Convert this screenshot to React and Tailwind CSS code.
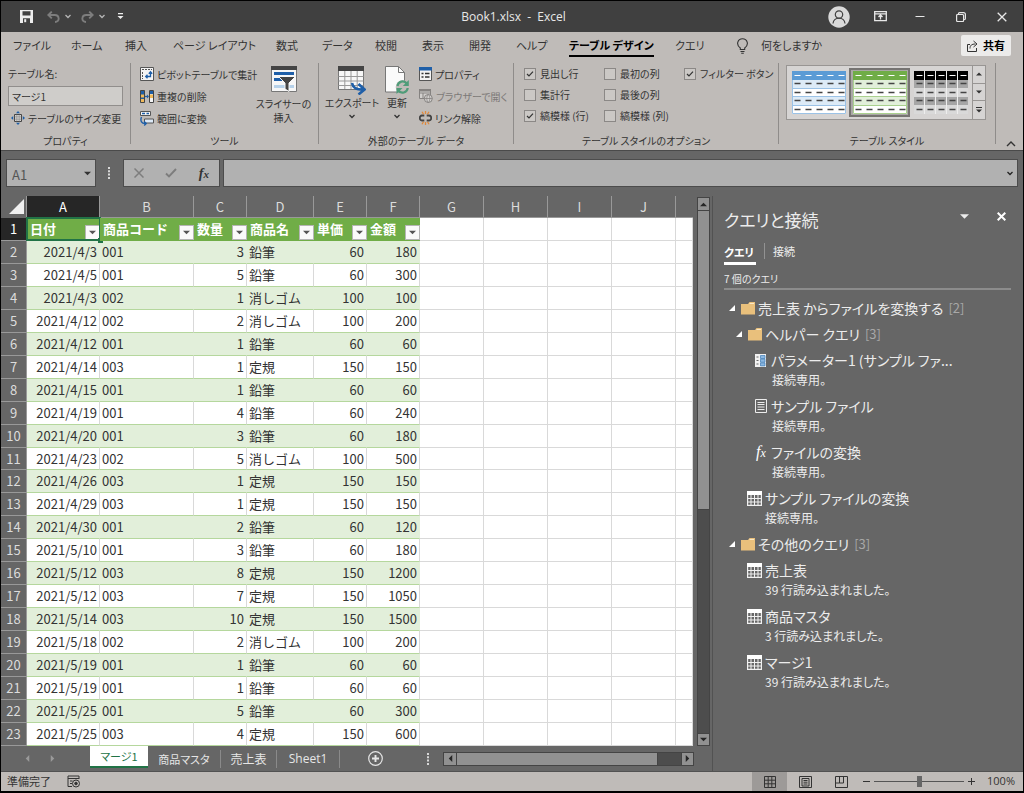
import { useState } from 'react';

const TABS = [
  { name: 'ファイル', width: 'w-[58px]' },
  { name: 'ホーム', width: 'w-[54px]' },
  { name: '挿入', width: 'w-[48px]' },
  { name: 'ページ レイアウト', width: 'w-[103px]' },
  { name: '数式', width: 'w-[46px]' },
  { name: 'データ', width: 'w-[53px]' },
  { name: '校閲', width: 'w-[47px]' },
  { name: '表示', width: 'w-[47px]' },
  { name: '開発', width: 'w-[47px]' },
  { name: 'ヘルプ', width: 'w-[53px]' },
  { name: 'テーブル デザイン', width: 'w-[106px]' },
  { name: 'クエリ', width: 'w-[60px]' }
];

const HEADERS = ['日付', '商品コード', '数量', '商品名', '単価', '金額'];

const PRODUCTS = {
  '001': { name: '鉛筆', price: 60 },
  '002': { name: '消しゴム', price: 100 },
  '003': { name: '定規', price: 150 }
};

const SALES = [
  ['2021/4/3', '001', 3],
  ['2021/4/5', '001', 5],
  ['2021/4/3', '002', 1],
  ['2021/4/12', '002', 2],
  ['2021/4/12', '001', 1],
  ['2021/4/14', '003', 1],
  ['2021/4/15', '001', 1],
  ['2021/4/19', '001', 4],
  ['2021/4/20', '001', 3],
  ['2021/4/23', '002', 5],
  ['2021/4/26', '003', 1],
  ['2021/4/29', '003', 1],
  ['2021/4/30', '001', 2],
  ['2021/5/10', '001', 3],
  ['2021/5/12', '003', 8],
  ['2021/5/12', '003', 7],
  ['2021/5/14', '003', 10],
  ['2021/5/18', '002', 2],
  ['2021/5/19', '001', 1],
  ['2021/5/19', '001', 1],
  ['2021/5/25', '001', 5],
  ['2021/5/25', '003', 4]
];

const QUERIES = [
  { type: 'folder', indent: 'pl-[5px]', name: '売上表 からファイルを変換する', count: 2 },
  { type: 'folder', indent: 'pl-[12px]', name: 'ヘルパー クエリ', count: 3 },
  { type: 'param', indent: 'pl-[30px]', name: 'パラメーター1 (サンプル ファ...', note: '接続専用。' },
  { type: 'text', indent: 'pl-[30px]', name: 'サンプル ファイル', note: '接続専用。' },
  { type: 'fx', indent: 'pl-[30px]', name: 'ファイルの変換', note: '接続専用。' },
  { type: 'table', indent: 'pl-[23px]', name: 'サンプル ファイルの変換', note: '接続専用。' },
  { type: 'folder', indent: 'pl-[5px]', name: 'その他のクエリ', count: 3 },
  { type: 'table', indent: 'pl-[23px]', name: '売上表', note: '39 行読み込まれました。' },
  { type: 'table', indent: 'pl-[23px]', name: '商品マスタ', note: '3 行読み込まれました。' },
  { type: 'table', indent: 'pl-[23px]', name: 'マージ1', note: '39 行読み込まれました。' }
];

const Chevron = ({ className }) => (
  <svg className={className} width="8" height="5" viewBox="0 0 8 5" fill="none" stroke="currentColor" strokeWidth="1.3">
    <path d="M1.5 1 4 3.5 6.5 1" />
  </svg>
);

const Triangle = ({ dir = 'down', size = 7 }) => {
  const paths = {
    down: 'M0 2h8L4 6z',
    up: 'M0 6h8L4 2z',
    left: 'M6 0v8L2 4z',
    right: 'M2 0v8l4-4z'
  };
  return (
    <svg width={size} height={size} viewBox="0 0 8 8" fill="currentColor">
      <path d={paths[dir]} />
    </svg>
  );
};

const Dots = () => (
  <svg width="3" height="12" viewBox="0 0 3 12" fill="#d8d8d8">
    <path d="M0 0h2v2H0zM0 3.3h2v2H0zM0 6.6h2v2H0zM0 10h2v2H0z" />
  </svg>
);

/* Title bar */
const TitleBar = () => (
  <header className="flex h-[31px] shrink-0 items-center bg-[#404040] text-[#e8e8e8]">
    <div className="flex flex-1 items-center pl-[19px]">
      <button aria-label="上書き保存">
        <svg width="13" height="13" viewBox="0 0 13 13">
          <path d="M0 0h13v13H0z" fill="#ececec" />
          <path d="M2.5 1.2h8v4.3h-8zM3 8.3h7V13H3z" fill="#404040" />
          <path d="M4.2 9.2h2v3h-2z" fill="#ececec" />
        </svg>
      </button>
      <button aria-label="元に戻す" className="ml-[14px] flex items-center text-[#7d7d7d]">
        <svg width="13" height="12" viewBox="0 0 13 12" fill="none" stroke="currentColor" strokeWidth="1.9">
          <path d="M4.8.6 1.3 4l3.5 3.4M1.5 4h6.2c5 0 5.4 7 .3 7" />
        </svg>
        <Chevron className="ml-1 text-[#b5b5b5]" />
      </button>
      <button aria-label="やり直し" className="ml-[9px] flex items-center text-[#7d7d7d]">
        <svg width="13" height="12" viewBox="0 0 13 12" fill="none" stroke="currentColor" strokeWidth="1.9">
          <path d="M8.2.6 11.7 4 8.2 7.4M11.5 4H5.3c-5 0-5.4 7-.3 7" />
        </svg>
        <Chevron className="ml-1 text-[#b5b5b5]" />
      </button>
      <button aria-label="クイック アクセス ツール バーのユーザー設定" className="ml-[11px]">
        <svg width="7" height="7" viewBox="0 0 7 7" fill="#ececec">
          <path d="M1 0h5v1.3H1zM.5 3h6l-3 3z" />
        </svg>
      </button>
    </div>
    <h1 className="font-['Open_Sans','Noto_Sans_CJK_JP',sans-serif] text-[12px] whitespace-pre">Book1.xlsx  -  Excel</h1>
    <div className="flex flex-1 items-center justify-end pr-4">
      <button aria-label="アカウント">
        <svg width="22" height="22" viewBox="0 0 22 22">
          <circle cx="11" cy="11" r="10.7" fill="#d9d9d9" />
          <g fill="none" stroke="#404040" strokeWidth="1.2">
            <circle cx="11" cy="8.5" r="3.7" />
            <path d="M5 17.5c.5-7 11.5-7 12 0" />
          </g>
        </svg>
      </button>
      <button aria-label="リボンの表示オプション" className="ml-6">
        <svg width="13" height="11" viewBox="0 0 13 11" fill="none" stroke="currentColor" strokeWidth="1.3">
          <path d="M.7.7h11.6v9H.7zM.7 2.8h11.6M6.5 8.5V4.5M4.5 6l2-2 2 2" />
        </svg>
      </button>
      <button aria-label="最小化" className="ml-[28px]">
        <svg width="10" height="10" viewBox="0 0 10 10" stroke="currentColor"><path d="M.5 4.5h9" /></svg>
      </button>
      <button aria-label="元に戻す (縮小)" className="ml-[31px]">
        <svg width="10" height="10" viewBox="0 0 10 10" fill="none" stroke="currentColor" strokeWidth="1.2">
          <rect x=".6" y="2.5" width="7" height="7" rx="1" />
          <path d="M2.5 2.5V1.5Q2.5.6 3.5.6h4Q9.4.6 9.4 2.500v4Q9.400 7.500 8.500 7.500H7.500" />
        </svg>
      </button>
      <button aria-label="閉じる" className="ml-[31px]">
        <svg width="10" height="10" viewBox="0 0 10 10" stroke="currentColor" strokeWidth="1.3"><path d="m.7.7 8.6 8.6M9.3.7.7 9.3" /></svg>
      </button>
    </div>
  </header>
);

/* Ribbon pieces */
const RibbonGroup = ({ label, className, children }) => (
  <section className={`flex shrink-0 ${className}`}>
    <div className="flex min-w-0 flex-1 flex-col">
      <div className="flex h-[66px]">{children}</div>
      <h2 className="mt-1 h-4 text-center leading-4">{label}</h2>
    </div>
    <div className="h-[81px] w-px bg-[#8f8c8a]" />
  </section>
);

const SmallButton = ({ icon, label, disabled }) => (
  <button disabled={disabled} className="flex h-[22px] items-center gap-[3px] whitespace-nowrap disabled:text-[#7c7977]">
    <span className="shrink-0">{icon}</span>
    <span>{label}</span>
  </button>
);

const CheckOption = ({ label, defaultChecked = false }) => (
  <label className="flex h-[21px] items-center gap-1">
    <span className="relative block size-[12px]">
      <input
        type="checkbox"
        defaultChecked={defaultChecked}
        className="peer block size-[12px] appearance-none border border-[#8b8886] bg-[#cbc8c5]"
      />
      <svg className="pointer-events-none absolute inset-0 hidden peer-checked:block" width="12" height="12" viewBox="0 0 12 12" fill="none" stroke="#333" strokeWidth="1.2">
        <path d="m3 6 2 2 4-4.3" />
      </svg>
    </span>
    <span>{label}</span>
  </label>
);

const PivotIcon = () => (
  <svg width="14" height="14" viewBox="0 0 14 14">
    <path d="M.5.5h13v13H.5z" fill="#f4f4f4" stroke="#555" />
    <path d="M2 2.5h2M5 2.5h7M2.5 5v7" stroke="#555" strokeDasharray="2 1" />
    <path d="M10.5 5v4.5H6M8.8 6.7l1.7-1.9 1.7 1.9M7.5 7.8 5.7 9.5l1.8 1.8" fill="none" stroke="#1f5fa8" strokeWidth="1.3" />
  </svg>
);

const DuplicateIcon = () => (
  <svg width="14" height="13" viewBox="0 0 14 13">
    <path d="M.5.5h4v12h-4z" fill="#1f5fa8" stroke="#444" />
    <path d="M1 4.5h3v3H1zM1 9h3v3H1z" fill="#f0b95a" />
    <path d="M9.5.5h4v12h-4z" fill="#f4f4f4" stroke="#444" />
    <path d="M10 1h3v3h-3z" fill="#1f5fa8" />
    <path d="M10 4.5h3V8h-3z" fill="#f0b95a" />
    <path d="M5 6.500h3" stroke="#1f5fa8" strokeWidth="1.3" />
    <path d="M7 4.500v4l2-2z" fill="#1f5fa8" />
  </svg>
);

const RangeIcon = () => (
  <svg width="14" height="15" viewBox="0 0 14 15">
    <path d="M.5.5h10v4H.5z" fill="#f4f4f4" stroke="#555" />
    <path d="M2 2.5h3M6.5 2.5H9" stroke="#1f5fa8" strokeWidth="1.5" />
    <path d="M4.5 8h9v4h-9z" fill="#dce9f7" stroke="#555" />
    <path d="M1.5 6c-1.5 4 0 7 4.5 6.5M4.2 10.4l2 2-2 2" fill="none" stroke="#1f5fa8" strokeWidth="1.4" />
  </svg>
);

const ResizeIcon = () => (
  <svg width="14" height="14" viewBox="0 0 14 14">
    <path d="M3.5 3.5h7v7h-7z" fill="#d4d2d0" stroke="#444" />
    <path d="M5.8 3.5v7M8.2 3.5v7M3.5 5.8h7M3.5 8.2h7" stroke="#888" strokeWidth=".6" />
    <path d="M7 0 5 2.2h4zM7 14l-2-2.2h4zM0 7l2.2-2v4zM14 7l-2.2-2v4z" fill="#1f5fa8" />
  </svg>
);

const SlicerIcon = () => (
  <svg width="26" height="27" viewBox="0 0 26 27">
    <path d="M.5.5h25v25H.5z" fill="#f7f7f7" stroke="#777" />
    <path d="M0 0h26v4H0z" fill="#444" />
    <path d="M3 6h20v3H3zM3 12h8v3H3z" fill="#1f5fa8" />
    <path d="M3 19h20v3H3z" fill="#b7d2ea" />
    <path d="M7.5 10.500h17L18 17v8.500l-4-2.500v-6z" fill="#444" stroke="#f7f7f7" />
  </svg>
);

const ExportIcon = () => (
  <svg width="28" height="29" viewBox="0 0 28 29">
    <path d="M.5 1h25v22.5H.5z" fill="#f7f7f7" stroke="#777" />
    <path d="M0 0h26v5H0z" fill="#444" />
    <path d="M.5 10.5h25M.5 15h25M.5 19.5h25M6.8 5v18M13 5v18M19.2 5v18" stroke="#999" />
    <path d="M14 17c1 5 4 6.500 11 6.500M20.500 18l6 5.500-6 5" fill="none" stroke="#1f5fa8" strokeWidth="2.600" />
  </svg>
);

const RefreshIcon = () => (
  <svg width="25" height="28" viewBox="0 0 25 28">
    <path d="M.5.5h13l6 6V26H.5z" fill="#fafafa" stroke="#777" />
    <path d="M13.5.5v6h6" fill="none" stroke="#777" />
    <circle cx="17.5" cy="21" r="6.8" fill="#bfbbb8" />
    <path d="M12.500 20a5.200 5.200 0 0 1 9.300-2.500M22.700 22a5.200 5.200 0 0 1-9.400 2.500" fill="none" stroke="#4f9c79" strokeWidth="2.200" />
    <path d="M23.800 14v6h-6zM11.500 28v-6h6z" fill="#4f9c79" />
  </svg>
);

const PropertyIcon = () => (
  <svg width="13" height="14" viewBox="0 0 13 14">
    <path d="M.5.5h12v13H.5z" fill="#f4f4f4" stroke="#555" />
    <path d="M0 0h13v3.5H0z" fill="#1f5fa8" />
    <path d="M2.5 6.5h2M6 6.5h4.500M2.500 10h2M6 10h4.500" stroke="#333" strokeWidth="1.5" />
  </svg>
);

const BrowserIcon = () => (
  <svg width="14" height="14" viewBox="0 0 14 14" fill="none" stroke="#858280">
    <path d="M.5.5h11v9H.5zM.5 4h11M4 4v5.5" fill="#d2d0ce" />
    <path d="M0 0h12v2.5H0z" fill="#858280" stroke="none" />
    <circle cx="9.3" cy="9.5" r="4" fill="#d2d0ce" />
    <path d="M5.3 9.5h8M9.3 5.5c-2 2-2 6 0 8M9.3 5.500c2 2 2 6 0 8" strokeWidth=".8" />
  </svg>
);

const UnlinkIcon = () => (
  <svg width="13" height="14" viewBox="0 0 13 14" fill="none">
    <path d="M5.3 4.500H3C0 4.500 0 9.500 3 9.500h2.300M7.700 4.500H10c3 0 3 5 0 5H7.700" stroke="#444" strokeWidth="1.8" />
    <path d="M4.500 3.300 3 .7M6.500 3V0M8.500 3.300 10 .7M4.500 10.700 3 13.300M6.500 11v3M8.500 10.700l1.500 2.600" stroke="#e08a3c" strokeWidth="1.3" />
  </svg>
);

const StylePreview = ({ head, band, plain, line, dash, grid }) => (
  <svg width="54" height="43" viewBox="0 0 54 43">
    <rect width="54" height="43" fill={plain} />
    <rect width="54" height="9" fill={head} />
    <rect y="9" width="54" height="8" fill={band} />
    <rect y="26" width="54" height="8" fill={band} />
    {line && <path d="M.5 9v33.5h53V9M0 17.5h54M0 25.5h54M0 34.5h54" fill="none" stroke={line} />}
    {grid && <path d="M10.5 0v43M21.5 0v43M32.5 0v43M43.5 0v43" stroke={grid} />}
    <path d="M2.500 4.500h50" stroke="#fff" strokeDasharray="6 5" />
    <path d="M2.500 12.500h50M2.500 21.500h50M2.500 29.500h50M2.500 38.500h50" stroke={dash} strokeWidth="1.3" strokeDasharray="6 5" />
  </svg>
);

const Ribbon = () => {
  const [active, setActive] = useState('テーブル デザイン');

  return (
    <div className="h-[118px] shrink-0 overflow-hidden bg-[#bfbbb8] text-[10px] text-[#333] [font-feature-settings:'palt']">
      {/* Tabs */}
      <nav className="mb-1 flex h-[27px] items-center pl-3 text-[11px]">
        {TABS.map((tab) => (
          <div key={tab.name} className={`shrink-0 ${tab.width}`}>
            <button
              onClick={() => setActive(tab.name)}
              className={
                active === tab.name
                  ? 'h-[23px] border-b-2 border-black pt-[2px] font-bold text-black'
                  : 'h-[23px] border-b-2 border-transparent pt-[2px]'
              }
            >
              {tab.name}
            </button>
          </div>
        ))}
        <button className="ml-[2px] flex items-center gap-[13px]">
          <svg width="11" height="16" viewBox="0 0 11 16" fill="none" stroke="#333" strokeWidth="1.1">
            <path d="M3.300 11.500V10C-1.500 6.500.8.700 5.500.700S12.500 6.500 7.700 10v1.500zM3.500 13.500h4M4.200 15.300h2.600" />
          </svg>
          何をしますか
        </button>
        <button className="mr-3 ml-auto flex h-[21px] items-center gap-[5px] rounded-xs bg-[#ecebea] px-[6px] font-bold text-black">
          <svg width="11" height="12" viewBox="0 0 11 12" fill="none" stroke="#333">
            <path d="M3 4.500H.5v7h9V8M3 8.500c0-3 1.500-4.500 5.500-4.500M6.500 1 10 4 6.500 7" />
          </svg>
          共有
        </button>
      </nav>

      {/* Groups */}
      <div className="flex">
        <RibbonGroup label="プロパティ" className="w-[130px]">
          <div className="flex flex-1 flex-col pr-[7px] pl-[7px]">
            <label htmlFor="table-name" className="h-[22px] leading-[22px]">テーブル名:</label>
            <input id="table-name" defaultValue="マージ1" className="my-px h-[20px] w-full border border-[#918e8c] bg-[#cfcdca] px-[3px]" />
            <div className="pl-[3px]">
              <SmallButton icon={<ResizeIcon />} label="テーブルのサイズ変更" />
            </div>
          </div>
        </RibbonGroup>

        <RibbonGroup label="ツール" className="w-[188px]">
          <div className="flex w-[118px] shrink-0 flex-col pl-[9px]">
            <SmallButton icon={<PivotIcon />} label="ピボットテーブルで集計" />
            <SmallButton icon={<DuplicateIcon />} label="重複の削除" />
            <SmallButton icon={<RangeIcon />} label="範囲に変換" />
          </div>
          <button className="flex flex-1 flex-col items-center gap-1 pt-[3px] leading-[14px] whitespace-nowrap">
            <SlicerIcon />
            <span>スライサーの<br />挿入</span>
          </button>
        </RibbonGroup>

        <RibbonGroup label="外部のテーブル データ" className="w-[195px]">
          <button className="flex w-[66px] shrink-0 flex-col items-center pt-[3px] leading-[14px] whitespace-nowrap">
            <ExportIcon />
            <span className="mt-px">エクスポート</span>
            <Chevron className="mt-1" />
          </button>
          <button className="flex w-6 shrink-0 flex-col items-center pt-[3px] leading-[14px] whitespace-nowrap">
            <RefreshIcon />
            <span className="mt-[2px]">更新</span>
            <Chevron className="mt-1" />
          </button>
          <div className="flex flex-col pl-[10px]">
            <SmallButton icon={<PropertyIcon />} label="プロパティ" />
            <SmallButton icon={<BrowserIcon />} label="ブラウザーで開く" disabled />
            <SmallButton icon={<UnlinkIcon />} label="リンク解除" />
          </div>
        </RibbonGroup>

        <RibbonGroup label="テーブル スタイルのオプション" className="w-[265px]">
          <div className="grid grid-cols-[80px_80px_1fr] content-start pl-[10px] whitespace-nowrap">
            <CheckOption label="見出し行" defaultChecked />
            <CheckOption label="最初の列" />
            <CheckOption label="フィルター ボタン" defaultChecked />
            <CheckOption label="集計行" />
            <CheckOption label="最後の列" />
            <span />
            <CheckOption label="縞模様 (行)" defaultChecked />
            <CheckOption label="縞模様 (列)" />
          </div>
        </RibbonGroup>

        <RibbonGroup label="テーブル スタイル" className="w-[217px]">
          <div className="mt-[2px] ml-[7px] flex h-[55px] border border-[#989593] bg-[#d6d4d3]">
            <button aria-label="青, テーブル スタイル" className="flex w-[62px] items-center pl-[5px]">
              <StylePreview head="#5b9bd5" band="#ddebf7" plain="#fff" line="#9bc2e6" dash="#444" />
            </button>
            <button aria-label="緑, テーブル スタイル" className="my-[2px] flex w-[61px] items-center justify-center border-2 border-[#767472] bg-[#aaa8a6]">
              <StylePreview head="#70ad47" band="#e2efda" plain="#fff" line="#a9d08e" dash="#444" />
            </button>
            <button aria-label="黒, テーブル スタイル" className="flex w-[62px] items-center pl-1">
              <StylePreview head="#000" band="#a6a6a6" plain="#d9d9d9" grid="#eee" dash="#444" />
            </button>
            <div className="grid w-[13px] grid-rows-3 divide-y divide-[#989593] border-l border-[#989593]">
              <button aria-label="前の行" className="flex items-center justify-center"><Triangle dir="up" size={6} /></button>
              <button aria-label="次の行" className="flex items-center justify-center"><Triangle size={6} /></button>
              <button aria-label="その他" className="flex flex-col items-center justify-center">
                <span className="h-px w-[6px] bg-[#333]" />
                <Triangle size={6} />
              </button>
            </div>
          </div>
        </RibbonGroup>
        <button aria-label="リボンを折りたたむ" className="ml-[10px] flex items-end pb-[2px]">
          <svg width="10" height="6" viewBox="0 0 10 6" fill="none" stroke="#333" strokeWidth="1.4"><path d="m1 5 4-4 4 4" /></svg>
        </button>
      </div>
    </div>
  );
};

const FormulaBar = () => (
  <div className="flex shrink-0 items-center border-t border-[#4a4a4a] px-[5px] pt-2 pb-[9px] text-[13px] text-[#555]">
    <div className="flex h-7 w-[90px] items-center border border-[#4c4c4c] bg-[#b1b1b1] pr-1">
      <input aria-label="名前ボックス" defaultValue="A1" className="w-full min-w-0 px-[5px] pt-[3px]" />
      <button aria-label="名前の一覧" className="text-[#333]"><Triangle /></button>
    </div>
    <div className="flex w-[27px] justify-center"><Dots /></div>
    <div className="flex h-7 w-[97px] items-center justify-between border border-[#4c4c4c] bg-[#b1b1b1] pr-[10px] pl-[10px]">
      <button aria-label="キャンセル">
        <svg width="10" height="10" viewBox="0 0 10 10" stroke="#7d7d7d" strokeWidth="1.5"><path d="m.5.5 9 9M9.5.5l-9 9" /></svg>
      </button>
      <button aria-label="入力">
        <svg width="12" height="10" viewBox="0 0 12 10" fill="none" stroke="#7d7d7d" strokeWidth="1.9"><path d="m1 5.5 3 3L11 1" /></svg>
      </button>
      <button aria-label="関数の挿入" className="font-['Liberation_Serif',serif] text-[14px] font-bold text-[#333] italic">
        f<span className="text-[11px]">x</span>
      </button>
    </div>
    <div className="ml-[3px] flex h-7 flex-1 items-center border border-[#4c4c4c] bg-[#b1b1b1] pr-[3px]">
      <input aria-label="数式バー" className="w-full min-w-0 px-1" />
      <button aria-label="数式バーの展開"><Chevron className="text-[#222]" /></button>
    </div>
  </div>
);

const FilterButton = ({ label }) => (
  <button aria-label={`${label} フィルター`} className="flex size-[15px] shrink-0 items-center justify-center border border-[#b5b5b5] bg-[#fafafa] text-[#555]">
    <Triangle />
  </button>
);

const GRID_CELL = 'border-r border-b border-[#d9d9d9] p-0';

const Sheet = () => (
  <table className="h-full w-full table-fixed border-separate border-spacing-0 bg-white text-[13px] leading-4 text-[#333]">
    <colgroup>
      <col className="w-[26px]" />
      <col className="w-[73px]" />
      <col className="w-[94px]" />
      <col className="w-[53px]" />
      <col className="w-[67px]" />
      <col className="w-[53px]" />
      <col className="w-[53px]" />
      <col className="w-[64px]" />
      <col className="w-[64px]" />
      <col className="w-[64px]" />
      <col className="w-[64px]" />
      <col />
    </colgroup>
    <thead>
      <tr className="h-[22px] bg-[#666] text-[#dcdcdc]">
        <th className="border-r border-[#999] p-0">
          <svg className="ml-auto" width="17" height="16" viewBox="0 0 17 16" fill="#f0f0f0"><path d="M15 0v15H0z" /></svg>
        </th>
        {['A', 'B', 'C', 'D', 'E', 'F', 'G', 'H', 'I', 'J'].map((col) => (
          <th
            key={col}
            scope="col"
            className={
              col === 'A'
                ? 'border-r border-b border-[#999] bg-[#262626] p-0 font-normal text-white'
                : 'border-r border-b border-[#999] p-0 font-normal'
            }
          >
            {col}
          </th>
        ))}
        <th className="border-b border-[#999] p-0" />
      </tr>
    </thead>
    <tbody>
      <tr>
        <th scope="row" className="border-r border-b border-[#999] bg-[#262626] p-0 font-normal text-white">1</th>
        {HEADERS.map((header, i) => (
          <th key={header} scope="col" className="relative border-b border-[#70ad47] bg-[#70ad47] p-0 text-white">
            <div className="flex items-center justify-between pl-[3px]">
              <span className="whitespace-nowrap">{header}</span>
            </div>
            <div className="absolute right-0 bottom-0">
              <FilterButton label={header} />
            </div>
            {i === 0 && (
              <div className="pointer-events-none absolute -inset-px border-2 border-[#217346]">
                <span className="absolute -right-1 -bottom-1 size-[5px] bg-[#217346]" />
              </div>
            )}
          </th>
        ))}
        {[0, 1, 2, 3, 4].map((i) => <td key={i} className={GRID_CELL} />)}
      </tr>
      {SALES.map(([date, code, amount], i) => {
        const banded = i % 2 === 0;
        const cell = banded
          ? 'border-r border-b border-r-[#e2efda] border-b-[#b5d79d] bg-[#e2efda] px-[2px] py-0 whitespace-nowrap'
          : 'border-r border-b border-r-[#d9d9d9] border-b-[#b5d79d] px-[2px] py-0 whitespace-nowrap';
        const { name, price } = PRODUCTS[code];
        return (
          <tr key={i}>
            <th scope="row" className="border-r border-b border-[#999] bg-[#666] p-0 font-normal text-[#dcdcdc]">{i + 2}</th>
            <td className={`text-right ${cell}`}>{date}</td>
            <td className={cell}>{code}</td>
            <td className={`text-right ${cell}`}>{amount}</td>
            <td className={cell}>{name}</td>
            <td className={`text-right ${cell}`}>{price}</td>
            <td className={`text-right ${cell}`}>{price * amount}</td>
            {[0, 1, 2, 3, 4].map((n) => <td key={n} className={GRID_CELL} />)}
          </tr>
        );
      })}
    </tbody>
  </table>
);

const SheetTabs = () => (
  <div className="flex h-[25px] shrink-0 items-center text-[12px] text-[#e6e6e6]">
    <div className="flex w-[89px] items-center gap-[18px] pl-[23px] text-[#9a9a9a]">
      <button aria-label="前のシート"><Triangle dir="left" /></button>
      <button aria-label="次のシート"><Triangle dir="right" /></button>
    </div>
    <button className="h-[22px] w-[58px] self-start border-b-2 border-[#217346] bg-white text-[11px] text-[#217346] [font-feature-settings:'palt']">マージ1</button>
    <button className="h-[18px] w-[73px] border-r border-[#8a8a8a] text-[11px] leading-[18px] [font-feature-settings:'palt']">商品マスタ</button>
    <button className="h-[18px] w-[56px] border-r border-[#8a8a8a] leading-[18px]">売上表</button>
    <button className="h-[18px] w-[63px] border-r border-[#8a8a8a] font-['Open_Sans',sans-serif] leading-[18px]">Sheet1</button>
    <button aria-label="新しいシート" className="ml-[28px]">
      <svg width="15" height="15" viewBox="0 0 15 15" fill="none" stroke="#e6e6e6">
        <circle cx="7.5" cy="7.5" r="6.8" strokeWidth="1.2" />
        <path d="M7.5 4v7M4 7.500h7" strokeWidth="1.9" />
      </svg>
    </button>
    <div className="ml-auto"><Dots /></div>
    <div className="mr-[18px] ml-[13px] flex h-[14px] w-[251px] border border-[#444] bg-[#4d4d4d] text-[#262626]">
      <button aria-label="左へスクロール" className="flex w-3 items-center justify-center bg-[#919191]"><Triangle dir="left" /></button>
      <div className="w-[202px] border-x border-[#444] bg-[#919191]" />
      <button aria-label="右へスクロール" className="ml-auto flex w-3 items-center justify-center border-l border-[#444] bg-[#919191]"><Triangle dir="right" /></button>
    </div>
  </div>
);

const TableGlyph = () => (
  <svg width="15" height="15" viewBox="0 0 15 15">
    <path d="M.6.6h13.8v13.8H.6z" fill="none" stroke="#f0f0f0" strokeWidth="1.2" />
    <path d="M0 0h15v4H0z" fill="#fff" />
    <path d="M4 4v11M7.500 4v11M11 4v11M0 7.500h15M0 11h15" stroke="#f0f0f0" />
  </svg>
);

const QueryIcon = ({ type }) => {
  switch (type) {
    case 'folder':
      return (
        <svg width="14" height="13" viewBox="0 0 14 13">
          <path d="M0 2h7l1.500-2H14v12.500H0z" fill="#e9c07c" />
          <path d="M8.500 1.500H13" stroke="#fbe9c6" />
        </svg>
      );
    case 'param':
      return (
        <svg width="14" height="13" viewBox="0 0 14 13">
          <path d="M1 0h11v13H1z" fill="#f2f2f2" />
          <path d="M2.500 3h2M2.500 6.500h2M2.500 10h2" stroke="#666" />
          <path d="M6.500 1.500H11v3H6.500zM6.500 5.200H11v3H6.500zM6.500 8.900H11v3H6.500z" fill="#8db9e2" stroke="#3f7cb8" strokeWidth=".7" />
        </svg>
      );
    case 'text':
      return (
        <svg width="14" height="14" viewBox="0 0 14 14" fill="none" stroke="#ececec">
          <path d="M1.500.5h11v13h-11zM3.500 3.500h7M3.500 5.500h7M3.500 8h7M3.500 10.500h7" />
        </svg>
      );
    case 'fx':
      return (
        <span className="w-[14px] text-center font-['Liberation_Serif',serif] text-[16px] leading-4 text-white italic">
          f<span className="text-[12px]">x</span>
        </span>
      );
    default:
      return <TableGlyph />;
  }
};

const QueryPane = () => (
  <aside className="w-[311px] shrink-0 border-l border-[#525252] pr-3 pl-[11px] text-[#ececec] [font-feature-settings:'palt']">
    <div className="flex items-center pt-[10px]">
      <h2 className="flex-1 text-[17px] leading-7">クエリと接続</h2>
      <button aria-label="作業ウィンドウ オプション" className="mb-2"><Triangle size={9} /></button>
      <button aria-label="ウィンドウを閉じる" className="mr-[5px] mb-2 ml-7">
        <svg width="9" height="9" viewBox="0 0 9 9" stroke="#fff" strokeWidth="2"><path d="m.7.7 7.6 7.6M8.3.7.7 8.3" /></svg>
      </button>
    </div>
    <div className="mt-[9px] flex text-[11px] leading-4">
      <button className="h-[22px] w-8 border-b-[3px] border-white pb-[2px] text-left font-bold whitespace-nowrap text-white">クエリ</button>
      <button className="ml-2 h-4 border-l border-[#929292] pl-2">接続</button>
    </div>
    <p className="mt-[5px] border-b-2 border-[#8c8c8c] text-[10px] leading-[18px]">7 個のクエリ</p>
    <ul className="mt-[5px] text-[14px]">
      {QUERIES.map((query) => (
        <li key={query.name} className={query.indent}>
          <button className="flex h-[26px] w-full items-center gap-[3px] whitespace-nowrap">
            {query.type === 'folder' && (
              <svg className="mr-[3px]" width="6" height="6" viewBox="0 0 6 6" fill="#fff"><path d="M6 0v6H0z" /></svg>
            )}
            <QueryIcon type={query.type} />
            <span>{query.name}</span>
            {query.count && <span className="ml-[2px] text-[13px] text-[#a8a8a8]">[{query.count}]</span>}
          </button>
          {query.note && <p className="mb-[6px] pl-[18px] text-[12px] leading-[14px]">{query.note}</p>}
        </li>
      ))}
    </ul>
  </aside>
);

const StatusBar = () => (
  <footer className="flex h-5 shrink-0 items-center border-t border-[#525252] bg-[#bfbbb8] pl-[6px] text-[11px] text-[#333]">
    <span>準備完了</span>
    <button aria-label="マクロの記録" className="ml-4">
      <svg width="14" height="13" viewBox="0 0 14 13" fill="none" stroke="#333">
        <path d="M5 11.500H1V1h11v3M1 3.500h11M3 6h2.500M3 8.500h2" />
        <circle cx="9" cy="8.500" r="3.500" />
        <circle cx="9" cy="8.500" r="1.300" fill="#333" />
      </svg>
    </button>
    <div className="ml-auto flex h-full items-center">
      <button aria-label="標準" className="flex h-full w-[35px] items-center justify-center bg-[#9d9a98]">
        <svg width="12" height="12" viewBox="0 0 12 12" fill="none" stroke="#333"><path d="M.5.5h11v11H.5zM4.200 0v12M7.800 0v12M0 4.200h12M0 7.800h12" /></svg>
      </button>
      <button aria-label="ページ レイアウト" className="flex w-[36px] justify-center">
        <svg width="13" height="12" viewBox="0 0 13 12" fill="none" stroke="#333"><path d="M.5.5h12v11H.5zM3 2.500h7v7.500H3zM4.500 4.500h4M4.500 6.200h4M4.500 8h4" /></svg>
      </button>
      <button aria-label="改ページ プレビュー" className="flex w-[36px] justify-center">
        <svg width="13" height="12" viewBox="0 0 13 12" fill="none" stroke="#333"><path d="M.5.5h12v11H.5zM4.500.5v6.500h4V.5M0 7h4.500" /></svg>
      </button>
      <button aria-label="縮小" className="ml-1">
        <svg width="7" height="7" viewBox="0 0 7 7" stroke="#333"><path d="M0 3.500h7" /></svg>
      </button>
      <input
        type="range"
        aria-label="ズーム"
        defaultValue="50"
        className="mx-1 h-[11px] w-[90px] appearance-none bg-[linear-gradient(#555,#555)] bg-[length:100%_1px] bg-center bg-no-repeat [&::-webkit-slider-thumb]:h-[11px] [&::-webkit-slider-thumb]:w-[5px] [&::-webkit-slider-thumb]:appearance-none [&::-webkit-slider-thumb]:bg-[#666]"
      />
      <button aria-label="拡大">
        <svg width="7" height="7" viewBox="0 0 7 7" stroke="#333"><path d="M0 3.500h7M3.500 0v7" /></svg>
      </button>
      <span className="w-[48px] pr-2 text-right font-['Open_Sans',sans-serif]">100%</span>
    </div>
  </footer>
);

const App = () => (
  <div className="flex h-screen flex-col overflow-hidden border border-b-2 border-black bg-[#666] font-['Noto_Sans_CJK_JP',sans-serif]">
    <TitleBar />
    <Ribbon />
    <FormulaBar />
    <main className="flex min-h-0 flex-1">
      <div className="flex min-w-0 flex-1 flex-col">
        <div className="flex min-h-0 flex-1 pr-[2px]">
          <div className="min-w-0 flex-1 overflow-hidden">
            <Sheet />
          </div>
          <div className="mt-px ml-1 flex w-[13px] flex-col border border-[#444] bg-[#4d4d4d] text-[#262626]">
            <button aria-label="上へスクロール" className="flex h-3 items-center justify-center bg-[#919191]"><Triangle dir="up" /></button>
            <div className="h-[300px] border-y border-[#444] bg-[#919191]" />
            <button aria-label="下へスクロール" className="mt-auto flex h-3 items-center justify-center border-t border-[#444] bg-[#919191]"><Triangle /></button>
          </div>
        </div>
        <SheetTabs />
      </div>
      <QueryPane />
    </main>
    <StatusBar />
  </div>
);

export default App;
